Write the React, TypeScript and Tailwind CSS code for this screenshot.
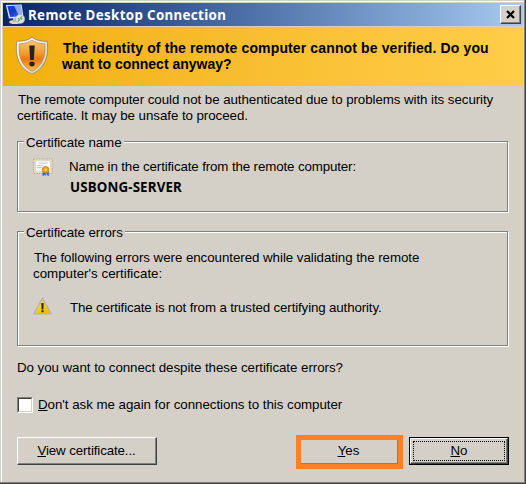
import type { ReactNode } from 'react';

const ARIAL = "font-['Liberation_Sans',Arial,sans-serif]";

function MonitorIcon() {
  return (
    <svg width="21" height="21" viewBox="0 0 21 21" className="shrink-0">
      <defs>
        <linearGradient id="screen" x1="0" y1="0" x2="1" y2="1">
          <stop offset="0" stopColor="#1f48dc" />
          <stop offset=".45" stopColor="#1437c4" />
          <stop offset="1" stopColor="#3f78f4" />
        </linearGradient>
      </defs>
      <ellipse cx="10" cy="18" rx="6" ry="2" fill="#d3d6dc" />
      <path d="M8 14h6l.5 4h-7z" fill="#b4bac4" />
      <path d="M.9 1 16.600.4l2 13.300-14.600.9z" fill="#dbe5fa" />
      <path d="M2.300 2 15.600 1.400l1.600 10.900-12 .8z" fill="url(#screen)" />
      <path d="M9 1.700l6.600-.3 1.500 10-3 .8z" fill="#b4caf9" opacity=".75" />
      <circle cx="15.200" cy="15" r="4.600" fill="#dfe3df" stroke="#9aa29a" strokeWidth=".5" />
      <path d="M12.900 14.300l1.800 1.400-1.800 1.800M17.300 12.300l-1.800 1.600 1.800 1.600" fill="none" stroke="#55a558" strokeWidth="1.100" />
    </svg>
  );
}

function ShieldIcon() {
  return (
    <svg width="34" height="40" viewBox="0 0 34 40" className="shrink-0">
      <defs>
        <linearGradient id="shield" x1="0" y1="0" x2="0" y2="1">
          <stop offset="0" stopColor="#f8c878" />
          <stop offset=".45" stopColor="#ee9a28" />
          <stop offset=".6" stopColor="#ea780c" />
          <stop offset="1" stopColor="#ffc04a" />
        </linearGradient>
        <linearGradient id="rim" x1="0" y1="0" x2="1" y2="1">
          <stop offset="0" stopColor="#fff" />
          <stop offset="1" stopColor="#c9cbc8" />
        </linearGradient>
      </defs>
      <path d="M17 1.200C13.500 4 8 5.600 1.800 5.200c-1.200 10-1.200 25.300 15.200 33C33.400 30.500 33.400 15.200 32.200 5.200 26 5.600 20.500 4 17 1.200z" fill="url(#rim)" stroke="#8d8069" strokeWidth=".8" />
      <path d="M17 4.200C13.500 6.600 9 7.800 4.300 7.800 3.500 17 4.500 29 17 35.300 29.500 29 30.500 17 29.700 7.800 25 7.800 20.500 6.600 17 4.200z" fill="url(#shield)" stroke="#b8782a" strokeWidth=".6" />
      <path d="M14.300 9.500h5.400l-.8 14.500h-3.800z" fill="#28221c" />
      <ellipse cx="17" cy="28" rx="2.700" ry="2.400" fill="#28221c" />
    </svg>
  );
}

function CertificateIcon() {
  return (
    <svg width="20" height="19" viewBox="0 0 20 19" className="shrink-0">
      <rect x=".7" y="1" width="18.600" height="14.500" fill="#e9dfc8" stroke="#b9a888" strokeWidth="1" strokeDasharray="1.500 1" />
      <rect x="2.500" y="2.800" width="15" height="11" fill="#fbfbfb" stroke="#cfc8bb" strokeWidth=".6" />
      <path d="M5.500 5h9M4 7.500h6M4 9.500h5" stroke="#b4b8c4" strokeWidth=".8" />
      <path d="M9.600 13v5.200l2-1.200 1 1 .6-4.500zM15.800 13v5.200l-1.800-1.200-.9-3.500z" fill="#2366e4" />
      <circle cx="12.600" cy="11.700" r="3.300" fill="#e9a40a" stroke="#b97b05" strokeWidth=".7" />
      <circle cx="12.600" cy="11.700" r="1.200" fill="#fbd560" />
    </svg>
  );
}

function WarningIcon() {
  return (
    <svg width="20" height="18" viewBox="0 0 20 18" className="shrink-0">
      <defs>
        <linearGradient id="warn" x1="0" y1="0" x2="1" y2="1">
          <stop offset="0" stopColor="#fff06a" />
          <stop offset=".5" stopColor="#f5cf1a" />
          <stop offset="1" stopColor="#f0b400" />
        </linearGradient>
      </defs>
      <path d="M9.500 1.200.900 16.800h17.400z" fill="url(#warn)" stroke="#b8b5ac" strokeWidth="1.400" strokeLinejoin="round" />
      <path d="M8.300 6h2.400l-.3 6.500H8.600z" fill="#2c2a20" />
      <rect x="8.400" y="13.300" width="2.200" height="2" fill="#2c2a20" />
    </svg>
  );
}

function Key({ children }: { children: ReactNode }) {
  return <u className="decoration-1 underline-offset-1">{children}</u>;
}

function GroupBox({ title, className, children }: { title: ReactNode; className: string; children: ReactNode }) {
  return (
    <section className={`relative border border-[#808080] shadow-[inset_1px_1px_0_#fff,1px_1px_0_#fff] ${className}`}>
      <h2 className="absolute -top-[7px] left-[6px] h-4 bg-[#d4d0c8] pl-[2px] leading-4 tracking-[-0.1px] whitespace-nowrap">{title}</h2>
      {children}
    </section>
  );
}

export default function App() {
  return (
    <main className={`flex h-[484px] w-[526px] flex-col overflow-hidden border-r border-b border-[#404040] bg-[#d4d0c8] text-[13.33px] leading-4 whitespace-nowrap text-black ${ARIAL}`}>
      <div className="flex flex-1 flex-col border-r border-b border-[#808080] pt-px pl-px">
        <div className="flex flex-1 flex-col border-t border-l border-white pt-px pr-px pl-px">
          <header className="flex h-[23px] items-center bg-gradient-to-r from-[#0a246a] to-[#a6caf0] pr-[2px] pl-[2px]">
            <MonitorIcon />
            <h1 className="ml-[2px] flex-1 font-['Noto_Sans',sans-serif] text-[13.33px] font-bold tracking-[0.34px] text-white">Remote Desktop Connection</h1>
            <button className="flex h-[19px] w-[21px] items-center justify-center border border-t-white border-r-[#404040] border-b-[#404040] border-l-white bg-[#d4d0c8] shadow-[inset_-1px_-1px_0_#808080]">
              <svg width="9" height="9" viewBox="0 0 9 9">
                <path d="M1 1l7 7M8 1L1 8" stroke="#000" strokeWidth="2.200" />
              </svg>
            </button>
          </header>

          <div className="mt-px flex h-[59px] items-start bg-gradient-to-r from-[#f2b00a] to-[#ffcd48] pt-[9px] pl-[12px]">
            <ShieldIcon />
            <div className="mt-[4px] ml-[13px] text-sm leading-4 font-bold">
              <p className="pl-px tracking-[0.13px]">The identity of the remote computer cannot be verified. Do you</p>
              <p>want to connect anyway?</p>
            </div>
          </div>

          <div className="flex flex-col pt-[6px] pl-[14px]">
            <p className="pl-px tracking-[-0.07px]">The remote computer could not be authenticated due to problems with its security</p>
            <p className="tracking-[-0.06px]">certificate. It may be unsafe to proceed.</p>

            <GroupBox title={<span className="block w-[98px]">Certificate name</span>} className="mt-[17px] h-[71px] w-[491px] pt-[16px] pl-[15px]">
              <div className="flex">
                <CertificateIcon />
                <div className="ml-[16px] pt-[1px]">
                  <p className="tracking-[-0.13px]">Name in the certificate from the remote computer:</p>
                  <p className="mt-[4px] pl-px font-['Noto_Sans',sans-serif] font-bold tracking-[0.15px]">USBONG-SERVER</p>
                </div>
              </div>
            </GroupBox>

            <GroupBox title={<span className="block w-[99px]">Certificate errors</span>} className="mt-[19px] h-[115px] w-[491px] pt-[18px] pl-[15px]">
              <p className="pl-px tracking-[-0.055px]">The following errors were encountered while validating the remote</p>
              <p>computer's certificate:</p>
              <div className="mt-[15px] flex">
                <WarningIcon />
                <p className="mt-[3px] ml-[17px] tracking-[-0.14px]">The certificate is not from a trusted certifying authority.</p>
              </div>
            </GroupBox>

            <p className="mt-[14px] tracking-[-0.055px]">Do you want to connect despite these certificate errors?</p>

            <label className="mt-[21px] flex items-center tracking-[-0.04px]">
              <span className="h-4 w-4 border border-t-[#808080] border-r-white border-b-white border-l-[#808080]">
                <span className="block h-full w-full border border-t-[#404040] border-r-[#d4d0c8] border-b-[#d4d0c8] border-l-[#404040] bg-white" />
              </span>
              <span className="ml-[5px]"><Key>D</Key>on't ask me again for connections to this computer</span>
            </label>

            <div className="mt-[22px] flex items-start">
              <button className="mt-[2px] h-[28px] w-[140px] border border-t-white border-r-[#404040] border-b-[#404040] border-l-white pr-px pb-px tracking-[-0.12px] shadow-[inset_-1px_-1px_0_#808080]">
                <Key>V</Key>iew certificate...
              </button>
              <button className="ml-[139px] h-[34px] w-[107px] border-[5px] border-[#ff7f27] pr-[2px] pb-[2px] shadow-[inset_-1px_-1px_0_#808080]">
                <Key>Y</Key>es
              </button>
              <button className="mt-[2px] ml-[6px] h-[28px] w-[100px] border border-black">
                <span className="flex h-full w-full border border-t-white border-r-[#404040] border-b-[#404040] border-l-white p-[2px] shadow-[inset_-1px_-1px_0_#808080]">
                  <span className="flex flex-1 items-center justify-center border border-dotted border-black">
                    <span><Key>N</Key>o</span>
                  </span>
                </span>
              </button>
            </div>
          </div>
        </div>
      </div>
    </main>
  );
}
